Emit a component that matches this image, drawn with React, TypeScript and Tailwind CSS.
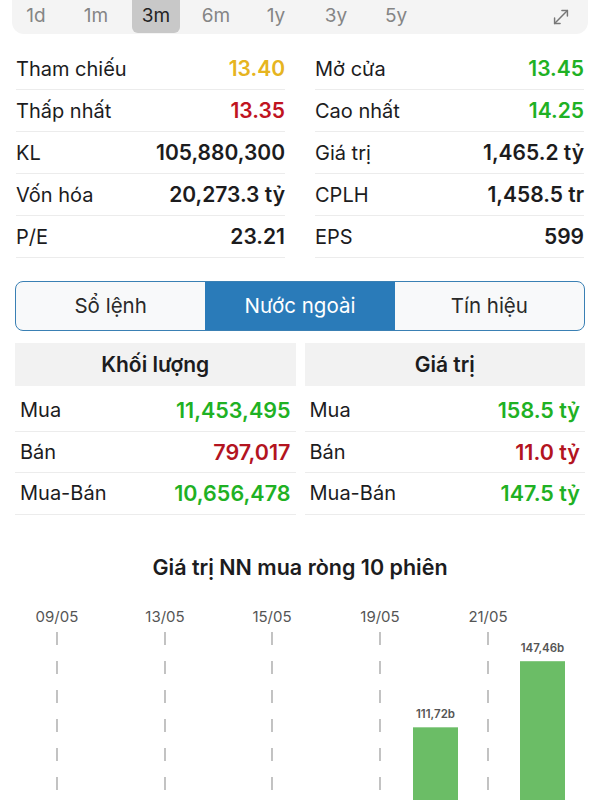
import { MoveDiagonal } from "lucide-react";

const ranges = ["1d", "1m", "3m", "6m", "1y", "3y", "5y"];

type Stat = { label: string; value: string; color: string };

const statsLeft: Stat[] = [
  { label: "Tham chiếu", value: "13.40", color: "text-[#e6b420]" },
  { label: "Thấp nhất", value: "13.35", color: "text-[#c0141f]" },
  { label: "KL", value: "105,880,300", color: "text-[#1c1c1e]" },
  { label: "Vốn hóa", value: "20,273.3 tỷ", color: "text-[#1c1c1e]" },
  { label: "P/E", value: "23.21", color: "text-[#1c1c1e]" },
];

const statsRight: Stat[] = [
  { label: "Mở cửa", value: "13.45", color: "text-[#1fb124]" },
  { label: "Cao nhất", value: "14.25", color: "text-[#1fb124]" },
  { label: "Giá trị", value: "1,465.2 tỷ", color: "text-[#1c1c1e]" },
  { label: "CPLH", value: "1,458.5 tr", color: "text-[#1c1c1e]" },
  { label: "EPS", value: "599", color: "text-[#1c1c1e]" },
];

const volumeRows: Stat[] = [
  { label: "Mua", value: "11,453,495", color: "text-[#1fb124]" },
  { label: "Bán", value: "797,017", color: "text-[#b3141f]" },
  { label: "Mua-Bán", value: "10,656,478", color: "text-[#1fb124]" },
];

const valueRows: Stat[] = [
  { label: "Mua", value: "158.5 tỷ", color: "text-[#1fb124]" },
  { label: "Bán", value: "11.0 tỷ", color: "text-[#b3141f]" },
  { label: "Mua-Bán", value: "147.5 tỷ", color: "text-[#1fb124]" },
];

const dates = [
  { x: 57, label: "09/05" },
  { x: 165, label: "13/05" },
  { x: 272, label: "15/05" },
  { x: 380, label: "19/05" },
  { x: 488, label: "21/05" },
];

const bars = [
  { x: 413, value: 111.72, label: "111,72b" },
  { x: 520, value: 147.46, label: "147,46b" },
];

function StatRow({ item }: { item: Stat }) {
  return (
    <div className="flex h-[42px] items-center justify-between border-b border-[#ececec]">
      <span className="text-[20px] text-[#1c1c1e]">{item.label}</span>
      <span className={`text-[21px] font-semibold ${item.color}`}>{item.value}</span>
    </div>
  );
}

function ForeignRow({ item }: { item: Stat }) {
  return (
    <div className="flex h-[41.5px] items-center justify-between border-b border-[#ececec] px-[5px]">
      <span className="text-[20px] text-[#1c1c1e]">{item.label}</span>
      <span className={`text-[21.5px] font-semibold ${item.color}`}>{item.value}</span>
    </div>
  );
}

function NetBuyChart() {
  // zero line sits below the visible area
  const base = 933;
  const scale = 1.85;
  return (
    <svg width="600" height="200" viewBox="0 600 600 200" className="block">
      {dates.map((d) => (
        <g key={d.label}>
          <text
            x={d.x}
            y={621}
            textAnchor="middle"
            fontSize="15"
            fill="#555"
            fontFamily="Inter, sans-serif"
          >
            {d.label}
          </text>
          <line
            x1={d.x}
            x2={d.x}
            y1={631}
            y2={800}
            stroke="#b4b4b4"
            strokeWidth="1.6"
            strokeDasharray="13 16"
          />
        </g>
      ))}
      {bars.map((b) => {
        const top = base - b.value * scale;
        return (
          <g key={b.label}>
            <rect x={b.x} y={top} width={45} height={800 - top} fill="#6bbd66" />
            <text
              x={b.x + 22.5}
              y={top - 9}
              textAnchor="middle"
              fontSize="11.5"
              fontWeight="600"
              fill="#555"
              fontFamily="Inter, sans-serif"
            >
              {b.label}
            </text>
          </g>
        );
      })}
    </svg>
  );
}

export default function App() {
  return (
    <div className="h-[800px] w-[600px] overflow-hidden bg-white font-['Inter',sans-serif]">
      {/* range selector */}
      <div className="mx-[12px] flex h-[34px] items-center rounded-b-xl bg-[#f4f4f4]">
        <div className="flex h-full gap-3">
          {ranges.map((r) => (
            <div
              key={r}
              className={`flex h-[33px] w-12 items-center justify-center rounded-b-md text-[19px] ${
                r === "3m" ? "bg-[#c8c8c8] text-[#222]" : "text-[#858585]"
              }`}
            >
              {r}
            </div>
          ))}
        </div>
        <MoveDiagonal className="ml-auto mr-[16px] text-[#777]" size={22} strokeWidth={1.6} />
      </div>

      {/* stats */}
      <div className="mt-[14px] grid grid-cols-2 gap-x-[30px] px-4">
        <div>
          {statsLeft.map((s) => (
            <StatRow key={s.label} item={s} />
          ))}
        </div>
        <div>
          {statsRight.map((s) => (
            <StatRow key={s.label} item={s} />
          ))}
        </div>
      </div>

      {/* tabs */}
      <div className="mx-[15px] mt-[23px] flex h-[50px] overflow-hidden rounded-lg border-[1.5px] border-[#3a80b4] bg-[#f8f9fa]">
        <div className="flex flex-1 items-center justify-center text-[20.5px] text-[#2a2a2a]">Sổ lệnh</div>
        <div className="flex flex-1 items-center justify-center bg-[#2a7bb9] text-[20.5px] text-white">Nước ngoài</div>
        <div className="flex flex-1 items-center justify-center text-[20.5px] text-[#2a2a2a]">Tín hiệu</div>
      </div>

      {/* foreign trading */}
      <div className="mt-[12px] grid grid-cols-2 gap-x-[9px] px-[15px]">
        <div>
          <div className="flex h-[43px] items-center justify-center bg-[#f2f2f2] text-[21px] font-semibold text-[#1c1c1e]">
            Khối lượng
          </div>
          <div className="mt-[4px]">
            {volumeRows.map((r) => (
              <ForeignRow key={r.label} item={r} />
            ))}
          </div>
        </div>
        <div>
          <div className="flex h-[43px] items-center justify-center bg-[#f2f2f2] text-[21px] font-semibold text-[#1c1c1e]">
            Giá trị
          </div>
          <div className="mt-[4px]">
            {valueRows.map((r) => (
              <ForeignRow key={r.label} item={r} />
            ))}
          </div>
        </div>
      </div>

      {/* chart */}
      <div className="mt-[36px] text-center text-[21.5px] font-semibold text-[#1c1c1e]">
        Giá trị NN mua ròng 10 phiên
      </div>
      <div className="mt-[18px]">
        <NetBuyChart />
      </div>
    </div>
  );
}
